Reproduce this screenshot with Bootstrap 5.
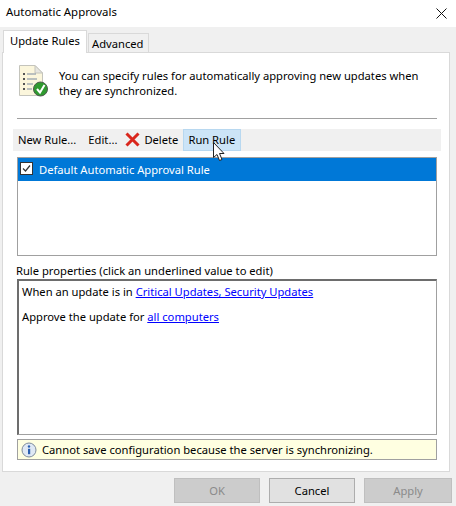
<!DOCTYPE html>
<html lang="en">
<head>
  <meta charset="UTF-8" />
  <title>Automatic Approvals</title>
  <link href="https://cdn.jsdelivr.net/npm/bootstrap@5.3.2/dist/css/bootstrap.min.css" rel="stylesheet">
  <style>
    html, body { width: 456px; height: 506px; overflow: hidden; }
    body { background: #f0f0f0; font-family: "Noto Sans", "Open Sans", sans-serif; font-size: 11.2px; line-height: 16px; color: #000; }
    .title-bar { height: 27px; background: #fff; padding: 4px 5px 0 6px; font-size: 11.4px; }
    .tab-strip { height: 25px; padding: 3px 0 0 3px; gap: 1px; align-items: flex-end; }
    .tab-item { border: 1px solid #d9d9d9; border-bottom: 0; }
    .tab-on { height: 23px; width: 84px; background: #fff; padding: 2px 0 0 6px; margin-bottom: -1px; position: relative; z-index: 1; }
    .tab-off { height: 19px; width: 61px; background: #f0f0f0; padding: 2px 0 0 3px; }
    .tab-panel { height: 420px; margin: 0 6px 0 2px; background: #fff; border: 1px solid #d9d9d9; padding-left: 14px; padding-right: 12px; position: relative; }
    .intro { height: 66px; padding-top: 11px; border-bottom: 1px solid #a0a0a0; }
    .intro-text { padding-top: 4px; padding-left: 10px; line-height: 15px; }
    .tool-strip { height: 22px; margin: 10px -4px 0 -4px; background: #f0f0f0; align-items: center; position: relative; }
    .tool-btn { height: 22px; padding: 3px 0 0 5px; white-space: nowrap; }
    .tool-edit { padding-left: 12px; }
    .tool-delete { padding-left: 8px; }
    .tool-hover { background: #cce4f7; border: 1px solid #b8d8f0; margin-left: 5px; padding: 2px 4px 0 4px; width: 58px; }
    .rule-list { height: 99px; margin-top: 6px; border: 1px solid #a0a0a0; }
    .rule-row { height: 23px; background: #0078d7; color: #fff; padding: 4px 0 0 2px; }
    .check-box { width: 13px; height: 13px; background: #fff; border: 1px solid #333; margin-right: 6px; display: block; flex: none; }
    .prop-label { margin-top: 5px; height: 18px; padding-top: 2px; margin-left: -1px; }
    .prop-box { height: 156px; border: 1px solid #a0a0a0; border-top: 2px solid #6d6d6d; border-left: 2px solid #6d6d6d; padding: 3px 0 0 3px; }
    .prop-box p { margin: 0 0 9px 0; }
    .prop-box a { color: #0000ff; }
    .info-bar { height: 21px; margin-top: 4px; background: #ffffe1; border: 1px solid #a0a0a0; padding: 1px 0 0 3px; align-items: center; gap: 5px; }
    .dlg-foot { height: 34px; padding: 6px 4px 0 0; justify-content: flex-end; gap: 9px; }
    .dlg-btn { width: 86px; height: 25px; padding: 0; border-radius: 0; font-size: 11.2px; line-height: 20px; color: #000; background: #e1e1e1; border: 1px solid #adadad; }
    .dlg-btn:disabled { color: #8a8a8a; background: #cccccc; border-color: #bfbfbf; opacity: 1; }
    .dlg-apply { width: 88px; }
    .mouse-pointer { position: absolute; left: 209px; top: 89px; }
  </style>
</head>
<body>

  <div class="title-bar d-flex justify-content-between">
    <span>Automatic Approvals</span>
    <svg width="11" height="11" viewBox="0 0 11 11" class="mt-1 me-1"><path d="M0.5 0.5L10.5 10.5M10.5 0.5L0.5 10.5" stroke="#111" fill="none"/></svg>
  </div>

  <!-- Tabs -->
  <div class="tab-strip d-flex">
    <div class="tab-item tab-on">Update Rules</div>
    <div class="tab-item tab-off">Advanced</div>
  </div>

  <div class="tab-panel">
    <div class="intro d-flex">
      <svg width="32" height="34" viewBox="0 0 32 34" class="flex-none">
        <path d="M2.5 1.5H18L25.5 9V31.5H2.5Z" fill="#fbf6dc" stroke="#c4c4bc"/>
        <path d="M18 1.5V9H25.5Z" fill="#e6e6e0" stroke="#c4c4bc"/>
        <g fill="#555"><rect x="6" y="9" width="2" height="2"/><rect x="6" y="14" width="2" height="2"/><rect x="6" y="19" width="2" height="2"/><rect x="6" y="24" width="2" height="2"/></g>
        <g stroke="#7a8aa0"><path d="M10 10H19M10 15H20M10 20H16M10 25H15"/></g>
        <circle cx="23.5" cy="25" r="7" fill="#2f9a2f" stroke="#4d5a4d"/>
        <path d="M20 25L23 28.5L27.5 21" stroke="#fff" stroke-width="2" fill="none"/>
      </svg>
      <div class="intro-text">You can specify rules for automatically approving new updates when<br>they are synchronized.</div>
    </div>

    <!-- Toolbar -->
    <div class="tool-strip d-flex">
      <div class="tool-btn">New Rule...</div>
      <div class="tool-btn tool-edit">Edit...</div>
      <div class="tool-btn tool-delete d-flex">
        <svg width="15" height="15" viewBox="0 0 15 15" class="me-1"><path d="M1.5 1.5L13.5 13.5M13.5 1.5L1.5 13.5" stroke="#d9261c" stroke-width="3" fill="none"/></svg>
        <span>Delete</span>
      </div>
      <div class="tool-btn tool-hover">Run Rule</div>
    </div>

    <div class="rule-list">
      <div class="rule-row d-flex">
        <svg class="check-box" viewBox="0 0 11 11"><path d="M2 5.5L4.5 8L9 2.5" stroke="#333" stroke-width="1.2" fill="none"/></svg>
        <span>Default Automatic Approval Rule</span>
      </div>
    </div>

    <div class="prop-label">Rule properties (click an underlined value to edit)</div>
    <div class="prop-box">
      <p>When an update is in <a href="#">Critical Updates, Security Updates</a></p>
      <p>Approve the update for <a href="#">all computers</a></p>
    </div>

    <div class="info-bar d-flex">
      <svg width="16" height="16" viewBox="0 0 16 16">
        <circle cx="8" cy="8" r="7" fill="#dfe8f4" stroke="#7f8c9c"/>
        <circle cx="8" cy="4.5" r="1.2" fill="#2a5fb0"/>
        <rect x="7" y="6.8" width="2.2" height="5.4" fill="#2a5fb0"/>
      </svg>
      <span>Cannot save configuration because the server is synchronizing.</span>
    </div>

    <svg class="mouse-pointer" width="13" height="20" viewBox="0 0 13 20">
      <path d="M1.5 0.5V15.5L5 12.5L7.5 18.5L10 17.5L7.5 11.5H12Z" fill="#fff" stroke="#222"/>
    </svg>
  </div>

  <div class="dlg-foot d-flex">
    <button class="btn dlg-btn" disabled>OK</button>
    <button class="btn dlg-btn">Cancel</button>
    <button class="btn dlg-btn dlg-apply" disabled>Apply</button>
  </div>

</body>
</html>
